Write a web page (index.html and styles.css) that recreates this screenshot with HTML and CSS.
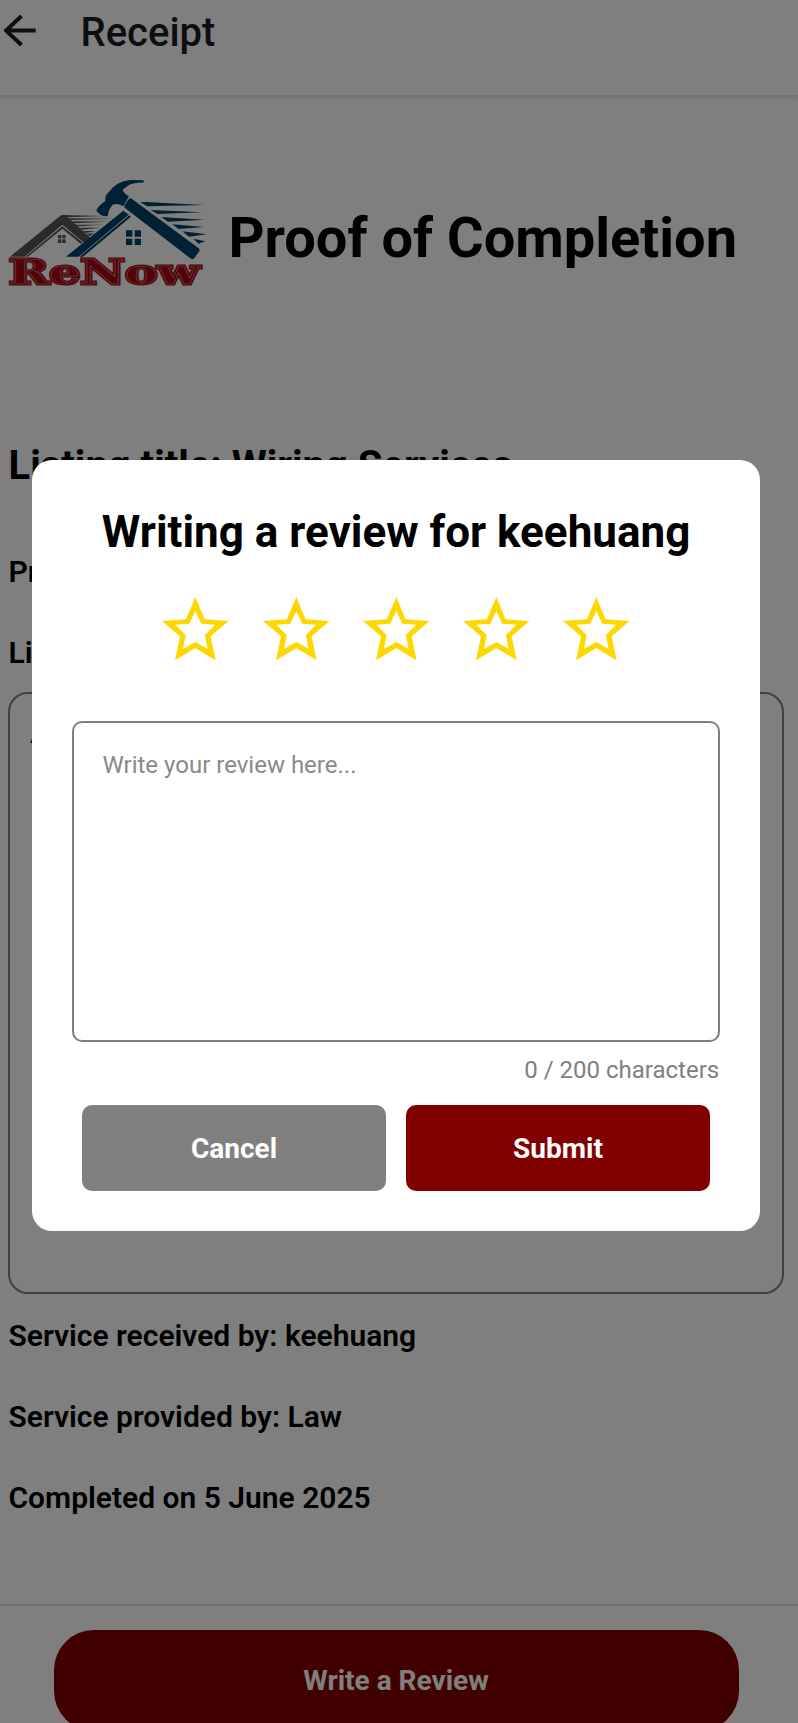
FILE: index.html
```
<!DOCTYPE html>
<html lang="en">
<head>
<meta charset="utf-8">
<title>Receipt</title>
<link rel="stylesheet" href="styles.css">
</head>
<body>
<div class="screen">
  <header class="topbar">
    <svg class="back" viewBox="0 0 32 32"><path d="M31.700 15.500H2M17.500 1L2 15.500L17.500 30" /></svg>
    <h1 class="topbar-title">Receipt</h1>
  </header>
  <main class="content">
    <section class="brand">
      <svg class="logo" viewBox="0 0 660 375">
        <g class="logo-gray">
          <path d="M30 260L184 135H196L272 204L252 218L187 164L74 260Z"/>
          <path d="M77 260L187 169L247 217L243 222L187 176L84 260Z"/>
          <path d="M190 135L310 138L202 142ZM204 145L345 146L214 150ZM215 154L325 155L224 160ZM226 164L310 164L234 169ZM238 173L300 173L246 179ZM249 183L288 183L257 189ZM260 191L282 190L269 199Z"/>
          <path d="M174 195h10v10h-10zM187 195h10v10h-10zM174 208h10v11h-10zM187 208h10v11h-10z"/>
        </g>
        <g class="logo-blue">
          <path d="M289 122Q296 105 316 94Q314 76 326 67Q349 34 390 30L430 31Q434 35 429 38Q391 36 368 59Q371 70 387 79L370 109Q353 98 338 104Q326 117 323 138Q306 142 289 122Z"/>
          <path d="M392 84Q386 85 373 107L374 113L570 264Q578 270 584 263L599 242Q599 235 592 232Z"/>
          <path d="M198 260L370 122L386 134L236 260Z"/>
          <path d="M239 260L388 136L393 140L249 260Z"/>
          <path d="M420 97L438 96L613 105L442 109ZM452 120L608 127L472 132ZM484 141L613 149L504 155ZM516 163L613 171L536 177ZM547 184L620 193L567 200ZM580 206L616 214L596 221Z"/>
          <path d="M378 181h19v19h-19zM404 181h19v19h-19zM378 206h19v19h-19zM404 206h19v19h-19z"/>
        </g>
        <g class="logo-word">
          <text class="word-base" x="26" y="341" textLength="573" lengthAdjust="spacingAndGlyphs">ReNow</text>
          <text class="word-line" x="26" y="341" textLength="573" lengthAdjust="spacingAndGlyphs">ReNow</text>
        </g>
      </svg>
      <h2 class="brand-title">Proof of Completion</h2>
    </section>
    <h3 class="listing">Listing title: Wiring Services</h3>
    <p class="line">Price: RM 100</p>
    <p class="line">Listing description:</p>
    <div class="description">A</div>
    <p class="line">Service received by: keehuang</p>
    <p class="line">Service provided by: Law</p>
    <p class="line">Completed on 5 June 2025</p>
  </main>
  <footer class="bottombar">
    <button class="write">Write a Review</button>
  </footer>
</div>
<div class="overlay">
  <div class="modal">
    <h2 class="modal-title">Writing a review for keehuang</h2>
    <div class="stars">
      <svg class="star" viewBox="0 0 200 190"><path d="M100 0L128 67L200 72L146 118L161 190L100 153L39 190L54 118L0 72L72 67ZM100 42L82 80L40 83L71 114L63 156L100 135L137 156L129 114L160 83L118 80Z"/></svg>
      <svg class="star" viewBox="0 0 200 190"><path d="M100 0L128 67L200 72L146 118L161 190L100 153L39 190L54 118L0 72L72 67ZM100 42L82 80L40 83L71 114L63 156L100 135L137 156L129 114L160 83L118 80Z"/></svg>
      <svg class="star" viewBox="0 0 200 190"><path d="M100 0L128 67L200 72L146 118L161 190L100 153L39 190L54 118L0 72L72 67ZM100 42L82 80L40 83L71 114L63 156L100 135L137 156L129 114L160 83L118 80Z"/></svg>
      <svg class="star" viewBox="0 0 200 190"><path d="M100 0L128 67L200 72L146 118L161 190L100 153L39 190L54 118L0 72L72 67ZM100 42L82 80L40 83L71 114L63 156L100 135L137 156L129 114L160 83L118 80Z"/></svg>
      <svg class="star" viewBox="0 0 200 190"><path d="M100 0L128 67L200 72L146 118L161 190L100 153L39 190L54 118L0 72L72 67ZM100 42L82 80L40 83L71 114L63 156L100 135L137 156L129 114L160 83L118 80Z"/></svg>
    </div>
    <div class="field">Write your review here...</div>
    <p class="counter">0 / 200 characters</p>
    <div class="actions">
      <button class="btn cancel">Cancel</button>
      <button class="btn submit">Submit</button>
    </div>
  </div>
</div>
</body>
</html>
```
FILE: styles.css
```
* { box-sizing: border-box; }
body { margin: 0; background: #fff; font-family: Roboto, sans-serif; color: #000; }
h1, h2, h3, p { margin: 0; }
button { border: 0; padding: 0; font-family: inherit; color: #fff; font-size: 28px; font-weight: 700; }
.screen { height: 1723px; overflow: hidden; display: flex; flex-direction: column; }
.topbar { height: 95px; flex: none; display: flex; align-items: flex-start; gap: 44.500px; padding: 0 0 0 4px; box-shadow: 0 1px 6px rgba(0,0,0,.22); }
.back { width: 32px; height: 32px; margin-top: 15px; fill: none; stroke: #1c1b1f; stroke-width: 4; }
.topbar-title { font-size: 40px; line-height: 48px; font-weight: 500; color: #1c1b1f; margin-top: 9px; }
.content { flex: 1; padding: 75px 14px 0 8px; }
.brand { display: flex; align-items: flex-start; margin-left: -8px; height: 270px; }
.logo { width: 220px; height: 125px; flex: none; }
.logo-gray { fill: #555; }
.logo-blue { fill: #004068; }
.logo-word { font-family: "DejaVu Serif", serif; font-weight: 700; font-size: 102px; }
.word-base { fill: #a6060f; stroke: #a6060f; stroke-width: 9; }
.word-line { fill: #a6060f; stroke: #c99; stroke-width: 1.500; }
.brand-title { font-size: 56px; line-height: 66px; margin: 35px 0 0 8.500px; white-space: nowrap; }
.listing { font-size: 40px; line-height: 48px; margin: 2px 0 64px; padding-left: .5px; }
.line { font-size: 30px; line-height: 36px; font-weight: 600; margin-bottom: 45px; padding-left: .5px; }
.description { height: 602px; margin: -24px 0 24px; border: 2px solid #808080; border-radius: 20px; padding: 23px 20px; font-size: 28px; line-height: 34px; }
.bottombar { flex: none; height: 119px; border-top: 2px solid #e0e0e0; padding: 24px 59.500px 0 53.500px; }
.write { width: 100%; height: 101px; border-radius: 40px; background: #800000; }
.overlay { position: absolute; inset: 0; height: 1723px; padding: 460px 38px 0 32px; background: rgba(0,0,0,.5); }
.modal { height: 771px; border-radius: 20px; background: #fff; padding: 46px 40px 0; display: flex; flex-direction: column; }
.modal-title { font-size: 44px; line-height: 52px; text-align: center; white-space: nowrap; }
.stars { display: flex; justify-content: center; gap: 33.600px; margin-top: 38.500px; }
.star { width: 66.600px; height: 63.400px; fill: gold; }
.field { height: 321px; margin-top: 61.100px; border: 2px solid #808080; border-radius: 10px; padding: 28px 28.500px; color: #8a8a8a; font-size: 24px; line-height: 28px; }
.counter { color: #808080; font-size: 24px; line-height: 28px; margin: 14px .8px 0 0; text-align: right; }
.actions { display: flex; gap: 20px; padding: 0 10px; margin-top: 21px; }
.btn { flex: 1; height: 86px; border-radius: 10px; padding-top: 2px; }
.cancel { background: #808080; }
.submit { background: #800000; }
```
